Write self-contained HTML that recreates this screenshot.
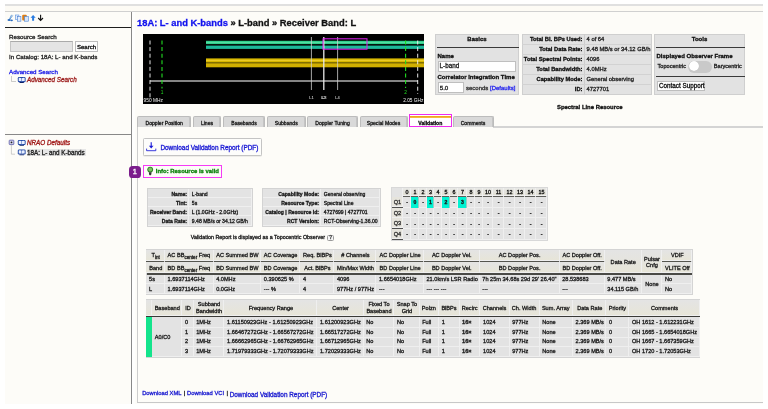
<!DOCTYPE html>
<html><head><meta charset="utf-8">
<style>
*{box-sizing:border-box}
html,body{margin:0;padding:0;background:#fff;width:768px;height:409px;overflow:hidden}
body{font-family:"Liberation Sans",sans-serif;color:#222;position:relative}
.abs{position:absolute}
#root{position:absolute;left:0;top:0;width:768px;height:409px;will-change:transform;-webkit-text-stroke:0.3px currentColor}
#cont{position:absolute;left:5px;top:4px;width:758px;height:400px;background:#fdfcf8}
.t{position:absolute;white-space:nowrap;line-height:1}
a,.lnk{color:#1a1aff;text-decoration:none}
</style></head><body><div id="root">
<div id="cont"></div>
<!-- top strip -->
<div class="abs" style="left:5px;top:4px;width:758px;height:2px;background:#e0e0e0"></div>
<div class="abs" style="left:5px;top:6px;width:758px;height:5px;background:#fdfbf5"></div>
<div class="abs" style="left:5px;top:11px;width:758px;height:1px;background:#d0d0d0"></div>

<!-- LEFT PANEL -->
<svg class="abs" style="left:7px;top:14px" width="38" height="8" viewBox="0 0 38 8">
  <path d="M4.6 0.8 L2.4 5.2 M5.8 1.4 L2.8 5.4" stroke="#4a8ad0" stroke-width="0.8" fill="none"/>
  <ellipse cx="2.1" cy="6" rx="1.6" ry="1.05" fill="#2a6cc0"/><ellipse cx="4.6" cy="6.3" rx="1.3" ry="0.9" fill="#2a6cc0"/>
  <rect x="8.3" y="1" width="3.6" height="4.6" fill="#e3eefe" stroke="#5a90dc" stroke-width="0.6"/>
  <rect x="10.3" y="2.6" width="3.6" height="4.6" fill="#e3eefe" stroke="#4a80d0" stroke-width="0.6"/>
  <rect x="15.2" y="0.8" width="4.6" height="5.8" rx="1" fill="#dc7d14"/>
  <rect x="17.6" y="2.6" width="3.8" height="4.6" fill="#d6e6fb" stroke="#4a86d8" stroke-width="0.6"/>
  <path d="M26.1 1 L28.7 3.7 L27.1 3.7 L27.1 6.8 L25.1 6.8 L25.1 3.7 L23.5 3.7 Z" fill="#2b7ce0"/>
  <path d="M33.6 0.8 L33.6 5.6 M31.2 4 L33.6 6.5 L36 4" stroke="#111" stroke-width="1.1" fill="none"/>
</svg>
<div class="abs" style="left:5px;top:27px;width:126px;height:1.2px;background:#1e1e1e"></div>
<div class="abs" style="left:131px;top:12px;width:1px;height:392px;background:#888"></div>
<div class="abs" style="left:132px;top:12px;width:3px;height:392px;background:#fefefd"></div>

<div class="t" style="left:9px;top:34px;font-size:6.2px;color:#222">Resource Search</div>
<div class="abs" style="left:9.8px;top:41.3px;width:63.4px;height:10.4px;background:#e4e4e4;border:1px solid #c4c4c4;border-top-color:#aaa"></div>
<div class="abs" style="left:75px;top:41.2px;width:23px;height:10.8px;background:#fdfdfd;border:1px solid #bdbdbd"></div>
<div class="t" style="left:77px;top:44px;font-size:6px;color:#111">Search</div>
<div class="t" style="left:9px;top:54.2px;font-size:6.2px;color:#222">In Catalog: 18A: L- and K-bands</div>
<div class="t" style="left:9px;top:69px;font-size:6.2px;color:#2020e8">Advanced Search</div>
<svg class="abs" style="left:11px;top:76px" width="16" height="8" viewBox="0 0 16 8">
  <path d="M0.5 0 L0.5 5.5 L5 5.5" stroke="#aaa" stroke-width="0.6" fill="none"/>
  <g transform="translate(6.8,1)"><rect x="0" y="0" width="7.8" height="5.2" rx="1.3" fill="#1d44a4"/><path d="M0.9 1 Q2.3 0.6 3.7 1.2 V4.3 Q2.3 3.8 0.9 4.2 Z" fill="#e9f0ff"/><path d="M4.1 1.2 Q5.5 0.6 6.9 1 V4.2 Q5.5 3.8 4.1 4.3 Z" fill="#e9f0ff"/><rect x="1.6" y="5" width="4.6" height="0.9" rx="0.4" fill="#0a1f66"/></g>
</svg>
<div class="t" style="left:27px;top:77.3px;font-size:6.3px;color:#9c1a1a;font-style:italic">Advanced Search</div>

<div class="abs" style="left:5px;top:134px;width:126px;height:1px;background:#888"></div>
<svg class="abs" style="left:6px;top:136px" width="22" height="22" viewBox="0 0 22 22">
  <rect x="3.2" y="4.2" width="4.6" height="4.4" rx="0.6" fill="#d8d8f0" stroke="#5656a6" stroke-width="0.8"/>
  <circle cx="5.5" cy="6.4" r="0.9" fill="#222"/>
  <path d="M5.4 8.8 V18.2 H9" stroke="#b0b0b0" stroke-width="0.6" fill="none"/>
  <g transform="translate(11.8,3.9)"><rect x="0" y="0" width="7.8" height="5.2" rx="1.3" fill="#1d44a4"/><path d="M0.9 1 Q2.3 0.6 3.7 1.2 V4.3 Q2.3 3.8 0.9 4.2 Z" fill="#e9f0ff"/><path d="M4.1 1.2 Q5.5 0.6 6.9 1 V4.2 Q5.5 3.8 4.1 4.3 Z" fill="#e9f0ff"/><rect x="1.6" y="5" width="4.6" height="0.9" rx="0.4" fill="#0a1f66"/></g>
  <g transform="translate(11.8,13.4)"><rect x="0" y="0" width="7.8" height="5.2" rx="1.3" fill="#1d44a4"/><path d="M0.9 1 Q2.3 0.6 3.7 1.2 V4.3 Q2.3 3.8 0.9 4.2 Z" fill="#e9f0ff"/><path d="M4.1 1.2 Q5.5 0.6 6.9 1 V4.2 Q5.5 3.8 4.1 4.3 Z" fill="#e9f0ff"/><rect x="1.6" y="5" width="4.6" height="0.9" rx="0.4" fill="#0a1f66"/></g>
</svg>
<div class="t" style="left:27px;top:139.8px;font-size:6.3px;color:#a01818;font-style:italic">NRAO Defaults</div>
<div class="abs" style="left:26.5px;top:148.5px;width:59px;height:7.5px;background:#e6e6e6"></div>
<div class="t" style="left:27px;top:149.8px;font-size:6.3px;color:#222">18A: L- and K-bands</div>

<!-- TITLE -->
<div class="t" style="left:137px;top:19px;font-size:9.36px;font-weight:bold;color:#111"><span style="color:#1212ee">18A: L- and K-bands</span> » L-band » Receiver Band: L</div>


<!-- SPECTRUM -->
<svg class="abs" style="left:143px;top:34px" width="281" height="70" viewBox="0 0 281 70">
  <rect x="0" y="0" width="281" height="70" fill="#000"/>
  <!-- bars -->
  <rect x="63" y="6.8" width="218" height="3.3" fill="#2fcf8c"/>
  <rect x="63" y="8" width="218" height="0.8" fill="#5fe0a8"/>
  <rect x="63" y="11.6" width="218" height="3.3" fill="#1cb89a"/>
  <rect x="63" y="24.4" width="218" height="4.2" fill="#d8b800"/>
  <rect x="63" y="25.9" width="218" height="0.9" fill="#f0d030"/>
  <rect x="63" y="29.2" width="218" height="4.1" fill="#d2b000"/>
  <!-- gray baseline -->
  <rect x="7" y="46.3" width="268" height="1.4" fill="#bdbdbd"/>
  <!-- dashed lines -->
  <line x1="7" y1="6.5" x2="7" y2="66" stroke="#f2f2f2" stroke-width="0.95" stroke-dasharray="4 2.6"/>
  <line x1="19" y1="6.5" x2="19" y2="54.5" stroke="#22dd22" stroke-width="1.1" stroke-dasharray="4 2.6"/>
  <line x1="262.6" y1="6.5" x2="262.6" y2="54" stroke="#22dd22" stroke-width="1.1" stroke-dasharray="4 2.6"/>
  <line x1="274.7" y1="6.5" x2="274.7" y2="60" stroke="#f2f2f2" stroke-width="0.95" stroke-dasharray="4 2.6"/>
  <!-- L lines -->
  <line x1="168.4" y1="3" x2="168.4" y2="56" stroke="#cfcfcf" stroke-width="0.8"/>
  <line x1="180.8" y1="3" x2="180.8" y2="56" stroke="#e8e8e8" stroke-width="1.3"/>
  <line x1="194.6" y1="3" x2="194.6" y2="56" stroke="#cfcfcf" stroke-width="0.8"/>
  <rect x="180" y="4.8" width="44" height="10.4" fill="none" stroke="#e020f0" stroke-width="1"/>
  <g font-family="Liberation Sans" fill="#f2f2f2">
    <text x="0.5" y="68" font-size="4.85">950 MHz</text>
    <text x="280.3" y="68" font-size="4.75" text-anchor="end">2.05 GHz</text>
    <text x="168.4" y="64.5" font-size="4" text-anchor="middle">L1</text>
    <text x="180.3" y="64.5" font-size="4" text-anchor="middle">L2</text>
    <text x="181.2" y="64.5" font-size="4" text-anchor="middle">L3</text>
    <text x="194.6" y="64.5" font-size="4" text-anchor="middle">L4</text>
  </g>
  <g font-family="Liberation Sans" font-size="4.8" fill="#22dd22">
    <text x="19" y="59.5" text-anchor="middle">1</text>
    <text x="262.6" y="60" text-anchor="middle">2</text>
  </g>
</svg>

<!-- BASICS -->
<div class="abs" style="left:435px;top:34px;width:84px;height:61px;background:#e2e2e2;border:1px solid #cfcfcf"></div>
<div class="t" style="left:435px;width:84px;text-align:center;top:36.3px;font-size:6px;font-weight:bold;color:#111">Basics</div>
<div class="abs" style="left:437px;top:46.5px;width:82px;height:1.3px;background:#3a3a3a"></div>
<div class="t" style="left:437.5px;top:52.5px;font-size:6px;font-weight:bold;color:#111">Name</div>
<div class="abs" style="left:438px;top:60.6px;width:78px;height:11px;background:#fff;border:1px solid #bfbfbf"></div>
<div class="t" style="left:439.6px;top:63.2px;font-size:6.3px;color:#222">L-band</div>
<div class="t" style="left:437.5px;top:73.5px;font-size:6px;font-weight:bold;color:#111">Correlator Integration Time</div>
<div class="abs" style="left:438px;top:82px;width:26px;height:11px;background:#fff;border:1px solid #bfbfbf"></div>
<div class="t" style="left:439.7px;top:84.6px;font-size:6.2px;color:#222">5.0</div>
<div class="t" style="left:466px;top:85px;font-size:6px;color:#333">seconds <span style="color:#2a2aee">[Defaults]</span></div>

<!-- STATS -->
<div class="abs" style="left:521.5px;top:34px;width:130px;height:61px;background:#e2e2e2;border:1px solid #cfcfcf"></div>
<div class="abs" style="left:583.5px;top:34px;width:1px;height:61px;background:#cdcdcd"></div>
<div class="abs" style="left:521.5px;top:44.3px;width:130px;height:1px;background:#d2d2d2"></div>
<div class="abs" style="left:521.5px;top:54.4px;width:130px;height:1px;background:#d2d2d2"></div>
<div class="abs" style="left:521.5px;top:64.2px;width:130px;height:1px;background:#d2d2d2"></div>
<div class="abs" style="left:521.5px;top:74.1px;width:130px;height:1px;background:#d2d2d2"></div>
<div class="abs" style="left:521.5px;top:84.3px;width:130px;height:1px;background:#d2d2d2"></div>
<div style="position:absolute;left:521.5px;top:34px;width:61px;font-size:5.75px;font-weight:bold;color:#111;text-align:right;line-height:10.1px">
Total Bl. BPs Used:<br>Total Data Rate:<br>Total Spectral Points:<br>Total Bandwidth:<br>Capability Mode:<br>ID:</div>
<div style="position:absolute;left:586.6px;top:34px;font-size:5.8px;color:#222;line-height:10.1px;white-space:nowrap">
4 of 64<br>9.48 MB/s or 34.12 GB/h<br>4096<br>4.0MHz<br>General observing<br>4727701</div>

<!-- TOOLS -->
<div class="abs" style="left:654px;top:34px;width:91px;height:61px;background:#e2e2e2;border:1px solid #cfcfcf"></div>
<div class="t" style="left:654px;width:91px;text-align:center;top:36.3px;font-size:6px;font-weight:bold;color:#111">Tools</div>
<div class="abs" style="left:656px;top:46.5px;width:89px;height:1.3px;background:#3a3a3a"></div>
<div class="t" style="left:656.5px;top:52.6px;font-size:6px;font-weight:bold;color:#111">Displayed Observer Frame</div>
<div class="t" style="left:657.5px;top:64px;font-size:5.6px;color:#222">Topocentric</div>
<div class="abs" style="left:687.6px;top:60.5px;width:24.2px;height:12px;border-radius:6px;background:#c9c9c9"></div>
<div class="abs" style="left:688.6px;top:61.4px;width:10px;height:10px;border-radius:50%;background:#fff;box-shadow:0 0 0.6px #999"></div>
<div class="t" style="left:713.8px;top:64px;font-size:5.6px;color:#222">Barycentric</div>
<div class="abs" style="left:656px;top:75.8px;width:89px;height:1.3px;background:#3a3a3a"></div>
<div class="abs" style="left:657.2px;top:81px;width:48px;height:10.4px;background:#fff;border:1px solid #bdbdbd"></div>
<div class="t" style="left:659px;top:83.2px;font-size:6.3px;color:#111">Contact Support</div>

<div class="t" style="left:557px;top:104.5px;font-size:5.9px;font-weight:bold;color:#111">Spectral Line Resource</div>

<!-- TABS -->
<style>
.tab{position:absolute;top:116.3px;height:10.6px;background:#d9d9d9;border:1px solid #bcbcbc;border-bottom:none;border-radius:2px 2px 0 0;font-size:5.1px;color:#1a1a1a;text-align:center;line-height:12.4px;white-space:nowrap;box-shadow:inset -1px 0 0 #c4c4c4}
</style>
<div class="abs" style="left:493px;top:126px;width:270px;height:2px;background:#d4d4d4"></div>
<div class="tab" style="left:137.2px;width:54px">Doppler Position</div>
<div class="tab" style="left:193px;width:28px">Lines</div>
<div class="tab" style="left:223px;width:42px">Basebands</div>
<div class="tab" style="left:266.5px;width:39.5px">Subbands</div>
<div class="tab" style="left:307px;width:51px">Doppler Tuning</div>
<div class="tab" style="left:359.5px;width:48px">Special Modes</div>
<div class="tab" style="left:452.5px;width:41px">Comments</div>
<div class="abs" style="left:408.8px;top:114.4px;width:43px;height:12.2px;background:#fff;border:1.2px solid #f02af0"></div>
<div class="abs" style="left:410px;top:115.6px;width:40.6px;height:2.2px;background:linear-gradient(#f09a10,#f6c050)"></div>
<div class="t" style="left:408.8px;width:43px;text-align:center;top:121.2px;font-size:5.1px;font-weight:bold;color:#111">Validation</div>

<!-- CONTENT PANEL BORDER -->
<div class="abs" style="left:136.5px;top:126.7px;width:1.4px;height:276.5px;background:#cdcdcd"></div>
<div class="abs" style="left:136.5px;top:401.8px;width:626.5px;height:1.4px;background:#c8c8c8"></div>

<!-- DOWNLOAD BUTTON -->
<div class="abs" style="left:142.5px;top:138px;width:119.3px;height:17.7px;background:#fdfdfb;border:1px solid #c4c4c4;border-radius:1.5px;box-shadow:0 0.5px 0.6px rgba(0,0,0,.12)"></div>
<svg class="abs" style="left:146px;top:142px" width="11" height="9.5" viewBox="0 0 11 9.5">
  <path d="M5.2 0.2 V4.6" stroke="#1a1ad8" stroke-width="1.1"/>
  <path d="M2.9 3.7 L7.5 3.7 L5.2 6.6 Z" fill="#1a1ad8"/>
  <path d="M0.6 6.6 V8.7 H9.8 V6.6" stroke="#1a1ad8" stroke-width="0.85" fill="none"/>
</svg>
<div class="t" style="left:160.4px;top:144.6px;font-size:6.43px;color:#1818d4">Download Validation Report (PDF)</div>

<!-- INFO -->
<div class="abs" style="left:128.8px;top:165.8px;width:12.1px;height:11.9px;border-radius:3.6px;background:#7b1d8c"></div>
<div class="t" style="left:128.8px;width:12.1px;text-align:center;top:167.6px;font-size:7.4px;color:#fff">1</div>
<div class="abs" style="left:142.7px;top:165px;width:79.2px;height:12.7px;border:1.2px solid #f53cf5;background:#fdfcf8"></div>
<svg class="abs" style="left:147px;top:166.3px" width="7" height="10" viewBox="0 0 7 10">
  <circle cx="3.2" cy="3.6" r="2.9" fill="#2e7f22"/>
  <circle cx="3.2" cy="3.5" r="1.9" fill="#7cc462"/>
  <path d="M1.8 6.3 H4.6 L4.2 8.8 Q3.2 9.8 2.2 8.8 Z" fill="#333"/>
</svg>
<div class="t" style="left:155.8px;top:168.5px;font-size:5.93px;font-weight:bold;color:#0c800c">Info: Resource is valid</div>






















<!--TABLES--><style>.c,.c0{position:absolute}.c{box-shadow:inset -1px -1px 0 #efefef}.ct{position:absolute;white-space:nowrap}</style>
<div class="abs" style="left:147px;top:188px;width:106px;height:39px;background:#d3d3d3"></div>
<div class="c" style="left:148px;top:189px;width:41px;height:9px;background:#e3e3e3;"></div><div class="ct" style="left:148.00px;width:39.00px;text-align:right;top:190.64px;font-size:5.1px;line-height:6.12px;color:#1a1a1a;font-weight:bold;">Name:</div>
<div class="c" style="left:189px;top:189px;width:63px;height:9px;background:#e3e3e3;"></div><div class="ct" style="left:191.80px;top:190.64px;font-size:5.1px;line-height:6.12px;color:#1a1a1a;">L-band</div>
<div class="c" style="left:148px;top:198px;width:41px;height:9px;background:#e3e3e3;"></div><div class="ct" style="left:148.00px;width:39.00px;text-align:right;top:199.64px;font-size:5.1px;line-height:6.12px;color:#1a1a1a;font-weight:bold;">Tint:</div>
<div class="c" style="left:189px;top:198px;width:63px;height:9px;background:#e3e3e3;"></div><div class="ct" style="left:191.80px;top:199.64px;font-size:5.1px;line-height:6.12px;color:#1a1a1a;">5s</div>
<div class="c" style="left:148px;top:207px;width:41px;height:9px;background:#e3e3e3;"></div><div class="ct" style="left:148.00px;width:39.00px;text-align:right;top:208.64px;font-size:5.1px;line-height:6.12px;color:#1a1a1a;font-weight:bold;">Receiver Band:</div>
<div class="c" style="left:189px;top:207px;width:63px;height:9px;background:#e3e3e3;"></div><div class="ct" style="left:191.80px;top:208.64px;font-size:5.1px;line-height:6.12px;color:#1a1a1a;">L (1.0GHz - 2.0GHz)</div>
<div class="c" style="left:148px;top:216px;width:41px;height:10px;background:#e3e3e3;"></div><div class="ct" style="left:148.00px;width:39.00px;text-align:right;top:218.14px;font-size:5.1px;line-height:6.12px;color:#1a1a1a;font-weight:bold;">Data Rate:</div>
<div class="c" style="left:189px;top:216px;width:63px;height:10px;background:#e3e3e3;"></div><div class="ct" style="left:191.80px;top:218.14px;font-size:5.1px;line-height:6.12px;color:#1a1a1a;">9.48 MB/s or 34.12 GB/h</div>
<div class="abs" style="left:262px;top:188px;width:119px;height:39px;background:#d3d3d3"></div>
<div class="c" style="left:263px;top:189px;width:58px;height:9px;background:#e3e3e3;"></div><div class="ct" style="left:263.00px;width:56.00px;text-align:right;top:190.64px;font-size:5.1px;line-height:6.12px;color:#1a1a1a;font-weight:bold;">Capability Mode:</div>
<div class="c" style="left:321px;top:189px;width:59px;height:9px;background:#e3e3e3;"></div><div class="ct" style="left:323.80px;top:190.64px;font-size:5.1px;line-height:6.12px;color:#1a1a1a;">General observing</div>
<div class="c" style="left:263px;top:198px;width:58px;height:9px;background:#e3e3e3;"></div><div class="ct" style="left:263.00px;width:56.00px;text-align:right;top:199.64px;font-size:5.1px;line-height:6.12px;color:#1a1a1a;font-weight:bold;">Resource Type:</div>
<div class="c" style="left:321px;top:198px;width:59px;height:9px;background:#e3e3e3;"></div><div class="ct" style="left:323.80px;top:199.64px;font-size:5.1px;line-height:6.12px;color:#1a1a1a;">Spectral Line</div>
<div class="c" style="left:263px;top:207px;width:58px;height:9px;background:#e3e3e3;"></div><div class="ct" style="left:263.00px;width:56.00px;text-align:right;top:208.64px;font-size:5.1px;line-height:6.12px;color:#1a1a1a;font-weight:bold;">Catalog | Resource Id:</div>
<div class="c" style="left:321px;top:207px;width:59px;height:9px;background:#e3e3e3;"></div><div class="ct" style="left:323.80px;top:208.64px;font-size:5.1px;line-height:6.12px;color:#1a1a1a;">4727699 | 4727701</div>
<div class="c" style="left:263px;top:216px;width:58px;height:10px;background:#e3e3e3;"></div><div class="ct" style="left:263.00px;width:56.00px;text-align:right;top:218.14px;font-size:5.1px;line-height:6.12px;color:#1a1a1a;font-weight:bold;">RCT Version:</div>
<div class="c" style="left:321px;top:216px;width:59px;height:10px;background:#e3e3e3;"></div><div class="ct" style="left:323.80px;top:218.14px;font-size:5.1px;line-height:6.12px;color:#1a1a1a;">RCT-Observing-1.36.00</div>
<div class="t" style="left:190.8px;top:235.2px;font-size:5.36px;color:#1a1a1a">Validation Report is displayed as a Topocentric Observer</div>
<div class="abs" style="left:327.3px;top:234.8px;width:6.7px;height:6px;border:0.8px solid #9a9a9a;border-radius:1.5px;background:#f6f6f6"></div>
<div class="t" style="left:327.3px;width:6.7px;text-align:center;top:235.5px;font-size:4.8px;font-weight:bold;color:#555">?</div>
<div class="abs" style="left:391px;top:187px;width:157px;height:54px;background:#d8d8d8"></div>
<div class="c" style="left:392px;top:188px;width:11px;height:10px;background:#e3e3e3;"></div>
<div class="c" style="left:403px;top:188px;width:8px;height:8px;background:linear-gradient(#e8e8e6,#e0ded2);"></div><div class="ct" style="left:403.00px;width:8.00px;text-align:center;top:189.10px;font-size:5.4px;line-height:6.48px;color:#111;">0</div>
<div class="abs" style="left:403px;top:195.7px;width:7.399999999999977px;height:1.3000000000000114px;background:#5e5e5a"></div>
<div class="c" style="left:411px;top:188px;width:8px;height:8px;background:linear-gradient(#e8e8e6,#e0ded2);"></div><div class="ct" style="left:411.00px;width:8.00px;text-align:center;top:189.10px;font-size:5.4px;line-height:6.48px;color:#111;">1</div>
<div class="abs" style="left:411px;top:195.7px;width:7.399999999999977px;height:1.3000000000000114px;background:#5e5e5a"></div>
<div class="c" style="left:419px;top:188px;width:8px;height:8px;background:linear-gradient(#e8e8e6,#e0ded2);"></div><div class="ct" style="left:419.00px;width:8.00px;text-align:center;top:189.10px;font-size:5.4px;line-height:6.48px;color:#111;">2</div>
<div class="abs" style="left:419px;top:195.7px;width:7.399999999999977px;height:1.3000000000000114px;background:#5e5e5a"></div>
<div class="c" style="left:427px;top:188px;width:7px;height:8px;background:linear-gradient(#e8e8e6,#e0ded2);"></div><div class="ct" style="left:427.00px;width:7.00px;text-align:center;top:189.10px;font-size:5.4px;line-height:6.48px;color:#111;">3</div>
<div class="abs" style="left:427px;top:195.7px;width:6.399999999999977px;height:1.3000000000000114px;background:#5e5e5a"></div>
<div class="c" style="left:434px;top:188px;width:8px;height:8px;background:linear-gradient(#e8e8e6,#e0ded2);"></div><div class="ct" style="left:434.00px;width:8.00px;text-align:center;top:189.10px;font-size:5.4px;line-height:6.48px;color:#111;">4</div>
<div class="abs" style="left:434px;top:195.7px;width:7.399999999999977px;height:1.3000000000000114px;background:#5e5e5a"></div>
<div class="c" style="left:442px;top:188px;width:8px;height:8px;background:linear-gradient(#e8e8e6,#e0ded2);"></div><div class="ct" style="left:442.00px;width:8.00px;text-align:center;top:189.10px;font-size:5.4px;line-height:6.48px;color:#111;">5</div>
<div class="abs" style="left:442px;top:195.7px;width:7.399999999999977px;height:1.3000000000000114px;background:#5e5e5a"></div>
<div class="c" style="left:450px;top:188px;width:8px;height:8px;background:linear-gradient(#e8e8e6,#e0ded2);"></div><div class="ct" style="left:450.00px;width:8.00px;text-align:center;top:189.10px;font-size:5.4px;line-height:6.48px;color:#111;">6</div>
<div class="abs" style="left:450px;top:195.7px;width:7.399999999999977px;height:1.3000000000000114px;background:#5e5e5a"></div>
<div class="c" style="left:458px;top:188px;width:9px;height:8px;background:linear-gradient(#e8e8e6,#e0ded2);"></div><div class="ct" style="left:458.00px;width:9.00px;text-align:center;top:189.10px;font-size:5.4px;line-height:6.48px;color:#111;">7</div>
<div class="abs" style="left:458px;top:195.7px;width:8.399999999999977px;height:1.3000000000000114px;background:#5e5e5a"></div>
<div class="c" style="left:467px;top:188px;width:8px;height:8px;background:linear-gradient(#e8e8e6,#e0ded2);"></div><div class="ct" style="left:467.00px;width:8.00px;text-align:center;top:189.10px;font-size:5.4px;line-height:6.48px;color:#111;">8</div>
<div class="abs" style="left:467px;top:195.7px;width:7.399999999999977px;height:1.3000000000000114px;background:#5e5e5a"></div>
<div class="c" style="left:475px;top:188px;width:8px;height:8px;background:linear-gradient(#e8e8e6,#e0ded2);"></div><div class="ct" style="left:475.00px;width:8.00px;text-align:center;top:189.10px;font-size:5.4px;line-height:6.48px;color:#111;">9</div>
<div class="abs" style="left:475px;top:195.7px;width:7.399999999999977px;height:1.3000000000000114px;background:#5e5e5a"></div>
<div class="c" style="left:483px;top:188px;width:10px;height:8px;background:linear-gradient(#e8e8e6,#e0ded2);"></div><div class="ct" style="left:483.00px;width:10.00px;text-align:center;top:189.10px;font-size:5.4px;line-height:6.48px;color:#111;">10</div>
<div class="abs" style="left:483px;top:195.7px;width:9.399999999999977px;height:1.3000000000000114px;background:#5e5e5a"></div>
<div class="c" style="left:493px;top:188px;width:11px;height:8px;background:linear-gradient(#e8e8e6,#e0ded2);"></div><div class="ct" style="left:493.00px;width:11.00px;text-align:center;top:189.10px;font-size:5.4px;line-height:6.48px;color:#111;">11</div>
<div class="abs" style="left:493px;top:195.7px;width:10.399999999999977px;height:1.3000000000000114px;background:#5e5e5a"></div>
<div class="c" style="left:504px;top:188px;width:11px;height:8px;background:linear-gradient(#e8e8e6,#e0ded2);"></div><div class="ct" style="left:504.00px;width:11.00px;text-align:center;top:189.10px;font-size:5.4px;line-height:6.48px;color:#111;">12</div>
<div class="abs" style="left:504px;top:195.7px;width:10.399999999999977px;height:1.3000000000000114px;background:#5e5e5a"></div>
<div class="c" style="left:515px;top:188px;width:10px;height:8px;background:linear-gradient(#e8e8e6,#e0ded2);"></div><div class="ct" style="left:515.00px;width:10.00px;text-align:center;top:189.10px;font-size:5.4px;line-height:6.48px;color:#111;">13</div>
<div class="abs" style="left:515px;top:195.7px;width:9.399999999999977px;height:1.3000000000000114px;background:#5e5e5a"></div>
<div class="c" style="left:525px;top:188px;width:11px;height:8px;background:linear-gradient(#e8e8e6,#e0ded2);"></div><div class="ct" style="left:525.00px;width:11.00px;text-align:center;top:189.10px;font-size:5.4px;line-height:6.48px;color:#111;">14</div>
<div class="abs" style="left:525px;top:195.7px;width:10.399999999999977px;height:1.3000000000000114px;background:#5e5e5a"></div>
<div class="c" style="left:536px;top:188px;width:11px;height:8px;background:linear-gradient(#e8e8e6,#e0ded2);"></div><div class="ct" style="left:536.00px;width:11.00px;text-align:center;top:189.10px;font-size:5.4px;line-height:6.48px;color:#111;">15</div>
<div class="abs" style="left:536px;top:195.7px;width:10.399999999999977px;height:1.3000000000000114px;background:#5e5e5a"></div>
<div class="c" style="left:392px;top:197px;width:11px;height:10px;background:#e6e4dc;"></div><div class="ct" style="left:392.00px;width:11.00px;text-align:center;top:198.60px;font-size:5.6px;line-height:6.72px;color:#333;">Q1</div>
<div class="abs" style="left:392px;top:207px;width:11px;height:1px;background:#505050"></div>
<div class="c" style="left:403px;top:197px;width:8px;height:11px;background:#e3e3e3;"></div><div class="ct" style="left:403.00px;width:8.00px;text-align:center;top:199.30px;font-size:5.1px;line-height:6.12px;color:#1a1a1a;font-weight:bold;">-</div>
<div class="c" style="left:411px;top:197px;width:8px;height:11px;background:#00f2d2;box-shadow:inset -0.6px 0 0 #f2b8b8"></div><div class="ct" style="left:411.00px;width:8.00px;text-align:center;top:199.30px;font-size:5.1px;line-height:6.12px;color:#1a1a1a;font-weight:bold;">0</div>
<div class="c" style="left:419px;top:197px;width:8px;height:11px;background:#e3e3e3;"></div><div class="ct" style="left:419.00px;width:8.00px;text-align:center;top:199.30px;font-size:5.1px;line-height:6.12px;color:#1a1a1a;font-weight:bold;">-</div>
<div class="c" style="left:427px;top:197px;width:7px;height:11px;background:#00f2d2;box-shadow:inset -0.6px 0 0 #f2b8b8"></div><div class="ct" style="left:427.00px;width:7.00px;text-align:center;top:199.30px;font-size:5.1px;line-height:6.12px;color:#1a1a1a;font-weight:bold;">1</div>
<div class="c" style="left:434px;top:197px;width:8px;height:11px;background:#e3e3e3;"></div><div class="ct" style="left:434.00px;width:8.00px;text-align:center;top:199.30px;font-size:5.1px;line-height:6.12px;color:#1a1a1a;font-weight:bold;">-</div>
<div class="c" style="left:442px;top:197px;width:8px;height:11px;background:#00f2d2;box-shadow:inset -0.6px 0 0 #f2b8b8"></div><div class="ct" style="left:442.00px;width:8.00px;text-align:center;top:199.30px;font-size:5.1px;line-height:6.12px;color:#1a1a1a;font-weight:bold;">2</div>
<div class="c" style="left:450px;top:197px;width:8px;height:11px;background:#e3e3e3;"></div><div class="ct" style="left:450.00px;width:8.00px;text-align:center;top:199.30px;font-size:5.1px;line-height:6.12px;color:#1a1a1a;font-weight:bold;">-</div>
<div class="c" style="left:458px;top:197px;width:9px;height:11px;background:#00f2d2;box-shadow:inset -0.6px 0 0 #f2b8b8"></div><div class="ct" style="left:458.00px;width:9.00px;text-align:center;top:199.30px;font-size:5.1px;line-height:6.12px;color:#1a1a1a;font-weight:bold;">3</div>
<div class="c" style="left:467px;top:197px;width:8px;height:11px;background:#e3e3e3;"></div><div class="ct" style="left:467.00px;width:8.00px;text-align:center;top:199.30px;font-size:5.1px;line-height:6.12px;color:#1a1a1a;font-weight:bold;">-</div>
<div class="c" style="left:475px;top:197px;width:8px;height:11px;background:#e3e3e3;"></div><div class="ct" style="left:475.00px;width:8.00px;text-align:center;top:199.30px;font-size:5.1px;line-height:6.12px;color:#1a1a1a;font-weight:bold;">-</div>
<div class="c" style="left:483px;top:197px;width:10px;height:11px;background:#e3e3e3;"></div><div class="ct" style="left:483.00px;width:10.00px;text-align:center;top:199.30px;font-size:5.1px;line-height:6.12px;color:#1a1a1a;font-weight:bold;">-</div>
<div class="c" style="left:493px;top:197px;width:11px;height:11px;background:#e3e3e3;"></div><div class="ct" style="left:493.00px;width:11.00px;text-align:center;top:199.30px;font-size:5.1px;line-height:6.12px;color:#1a1a1a;font-weight:bold;">-</div>
<div class="c" style="left:504px;top:197px;width:11px;height:11px;background:#e3e3e3;"></div><div class="ct" style="left:504.00px;width:11.00px;text-align:center;top:199.30px;font-size:5.1px;line-height:6.12px;color:#1a1a1a;font-weight:bold;">-</div>
<div class="c" style="left:515px;top:197px;width:10px;height:11px;background:#e3e3e3;"></div><div class="ct" style="left:515.00px;width:10.00px;text-align:center;top:199.30px;font-size:5.1px;line-height:6.12px;color:#1a1a1a;font-weight:bold;">-</div>
<div class="c" style="left:525px;top:197px;width:11px;height:11px;background:#e3e3e3;"></div><div class="ct" style="left:525.00px;width:11.00px;text-align:center;top:199.30px;font-size:5.1px;line-height:6.12px;color:#1a1a1a;font-weight:bold;">-</div>
<div class="c" style="left:536px;top:197px;width:11px;height:11px;background:#e3e3e3;"></div><div class="ct" style="left:536.00px;width:11.00px;text-align:center;top:199.30px;font-size:5.1px;line-height:6.12px;color:#1a1a1a;font-weight:bold;">-</div>
<div class="c" style="left:392px;top:208px;width:11px;height:10px;background:#e6e4dc;"></div><div class="ct" style="left:392.00px;width:11.00px;text-align:center;top:209.60px;font-size:5.6px;line-height:6.72px;color:#333;">Q2</div>
<div class="abs" style="left:392px;top:217.5px;width:11px;height:1.0px;background:#505050"></div>
<div class="c" style="left:403px;top:208px;width:8px;height:10px;background:#e3e3e3;"></div><div class="ct" style="left:403.00px;width:8.00px;text-align:center;top:210.30px;font-size:5.1px;line-height:6.12px;color:#1a1a1a;font-weight:bold;">-</div>
<div class="c" style="left:411px;top:208px;width:8px;height:10px;background:#e3e3e3;"></div><div class="ct" style="left:411.00px;width:8.00px;text-align:center;top:210.30px;font-size:5.1px;line-height:6.12px;color:#1a1a1a;font-weight:bold;">-</div>
<div class="c" style="left:419px;top:208px;width:8px;height:10px;background:#e3e3e3;"></div><div class="ct" style="left:419.00px;width:8.00px;text-align:center;top:210.30px;font-size:5.1px;line-height:6.12px;color:#1a1a1a;font-weight:bold;">-</div>
<div class="c" style="left:427px;top:208px;width:7px;height:10px;background:#e3e3e3;"></div><div class="ct" style="left:427.00px;width:7.00px;text-align:center;top:210.30px;font-size:5.1px;line-height:6.12px;color:#1a1a1a;font-weight:bold;">-</div>
<div class="c" style="left:434px;top:208px;width:8px;height:10px;background:#e3e3e3;"></div><div class="ct" style="left:434.00px;width:8.00px;text-align:center;top:210.30px;font-size:5.1px;line-height:6.12px;color:#1a1a1a;font-weight:bold;">-</div>
<div class="c" style="left:442px;top:208px;width:8px;height:10px;background:#e3e3e3;"></div><div class="ct" style="left:442.00px;width:8.00px;text-align:center;top:210.30px;font-size:5.1px;line-height:6.12px;color:#1a1a1a;font-weight:bold;">-</div>
<div class="c" style="left:450px;top:208px;width:8px;height:10px;background:#e3e3e3;"></div><div class="ct" style="left:450.00px;width:8.00px;text-align:center;top:210.30px;font-size:5.1px;line-height:6.12px;color:#1a1a1a;font-weight:bold;">-</div>
<div class="c" style="left:458px;top:208px;width:9px;height:10px;background:#e3e3e3;"></div><div class="ct" style="left:458.00px;width:9.00px;text-align:center;top:210.30px;font-size:5.1px;line-height:6.12px;color:#1a1a1a;font-weight:bold;">-</div>
<div class="c" style="left:467px;top:208px;width:8px;height:10px;background:#e3e3e3;"></div><div class="ct" style="left:467.00px;width:8.00px;text-align:center;top:210.30px;font-size:5.1px;line-height:6.12px;color:#1a1a1a;font-weight:bold;">-</div>
<div class="c" style="left:475px;top:208px;width:8px;height:10px;background:#e3e3e3;"></div><div class="ct" style="left:475.00px;width:8.00px;text-align:center;top:210.30px;font-size:5.1px;line-height:6.12px;color:#1a1a1a;font-weight:bold;">-</div>
<div class="c" style="left:483px;top:208px;width:10px;height:10px;background:#e3e3e3;"></div><div class="ct" style="left:483.00px;width:10.00px;text-align:center;top:210.30px;font-size:5.1px;line-height:6.12px;color:#1a1a1a;font-weight:bold;">-</div>
<div class="c" style="left:493px;top:208px;width:11px;height:10px;background:#e3e3e3;"></div><div class="ct" style="left:493.00px;width:11.00px;text-align:center;top:210.30px;font-size:5.1px;line-height:6.12px;color:#1a1a1a;font-weight:bold;">-</div>
<div class="c" style="left:504px;top:208px;width:11px;height:10px;background:#e3e3e3;"></div><div class="ct" style="left:504.00px;width:11.00px;text-align:center;top:210.30px;font-size:5.1px;line-height:6.12px;color:#1a1a1a;font-weight:bold;">-</div>
<div class="c" style="left:515px;top:208px;width:10px;height:10px;background:#e3e3e3;"></div><div class="ct" style="left:515.00px;width:10.00px;text-align:center;top:210.30px;font-size:5.1px;line-height:6.12px;color:#1a1a1a;font-weight:bold;">-</div>
<div class="c" style="left:525px;top:208px;width:11px;height:10px;background:#e3e3e3;"></div><div class="ct" style="left:525.00px;width:11.00px;text-align:center;top:210.30px;font-size:5.1px;line-height:6.12px;color:#1a1a1a;font-weight:bold;">-</div>
<div class="c" style="left:536px;top:208px;width:11px;height:10px;background:#e3e3e3;"></div><div class="ct" style="left:536.00px;width:11.00px;text-align:center;top:210.30px;font-size:5.1px;line-height:6.12px;color:#1a1a1a;font-weight:bold;">-</div>
<div class="c" style="left:392px;top:218px;width:11px;height:10px;background:#e6e4dc;"></div><div class="ct" style="left:392.00px;width:11.00px;text-align:center;top:220.10px;font-size:5.6px;line-height:6.72px;color:#333;">Q3</div>
<div class="abs" style="left:392px;top:228px;width:11px;height:1px;background:#505050"></div>
<div class="c" style="left:403px;top:218px;width:8px;height:11px;background:#e3e3e3;"></div><div class="ct" style="left:403.00px;width:8.00px;text-align:center;top:220.80px;font-size:5.1px;line-height:6.12px;color:#1a1a1a;font-weight:bold;">-</div>
<div class="c" style="left:411px;top:218px;width:8px;height:11px;background:#e3e3e3;"></div><div class="ct" style="left:411.00px;width:8.00px;text-align:center;top:220.80px;font-size:5.1px;line-height:6.12px;color:#1a1a1a;font-weight:bold;">-</div>
<div class="c" style="left:419px;top:218px;width:8px;height:11px;background:#e3e3e3;"></div><div class="ct" style="left:419.00px;width:8.00px;text-align:center;top:220.80px;font-size:5.1px;line-height:6.12px;color:#1a1a1a;font-weight:bold;">-</div>
<div class="c" style="left:427px;top:218px;width:7px;height:11px;background:#e3e3e3;"></div><div class="ct" style="left:427.00px;width:7.00px;text-align:center;top:220.80px;font-size:5.1px;line-height:6.12px;color:#1a1a1a;font-weight:bold;">-</div>
<div class="c" style="left:434px;top:218px;width:8px;height:11px;background:#e3e3e3;"></div><div class="ct" style="left:434.00px;width:8.00px;text-align:center;top:220.80px;font-size:5.1px;line-height:6.12px;color:#1a1a1a;font-weight:bold;">-</div>
<div class="c" style="left:442px;top:218px;width:8px;height:11px;background:#e3e3e3;"></div><div class="ct" style="left:442.00px;width:8.00px;text-align:center;top:220.80px;font-size:5.1px;line-height:6.12px;color:#1a1a1a;font-weight:bold;">-</div>
<div class="c" style="left:450px;top:218px;width:8px;height:11px;background:#e3e3e3;"></div><div class="ct" style="left:450.00px;width:8.00px;text-align:center;top:220.80px;font-size:5.1px;line-height:6.12px;color:#1a1a1a;font-weight:bold;">-</div>
<div class="c" style="left:458px;top:218px;width:9px;height:11px;background:#e3e3e3;"></div><div class="ct" style="left:458.00px;width:9.00px;text-align:center;top:220.80px;font-size:5.1px;line-height:6.12px;color:#1a1a1a;font-weight:bold;">-</div>
<div class="c" style="left:467px;top:218px;width:8px;height:11px;background:#e3e3e3;"></div><div class="ct" style="left:467.00px;width:8.00px;text-align:center;top:220.80px;font-size:5.1px;line-height:6.12px;color:#1a1a1a;font-weight:bold;">-</div>
<div class="c" style="left:475px;top:218px;width:8px;height:11px;background:#e3e3e3;"></div><div class="ct" style="left:475.00px;width:8.00px;text-align:center;top:220.80px;font-size:5.1px;line-height:6.12px;color:#1a1a1a;font-weight:bold;">-</div>
<div class="c" style="left:483px;top:218px;width:10px;height:11px;background:#e3e3e3;"></div><div class="ct" style="left:483.00px;width:10.00px;text-align:center;top:220.80px;font-size:5.1px;line-height:6.12px;color:#1a1a1a;font-weight:bold;">-</div>
<div class="c" style="left:493px;top:218px;width:11px;height:11px;background:#e3e3e3;"></div><div class="ct" style="left:493.00px;width:11.00px;text-align:center;top:220.80px;font-size:5.1px;line-height:6.12px;color:#1a1a1a;font-weight:bold;">-</div>
<div class="c" style="left:504px;top:218px;width:11px;height:11px;background:#e3e3e3;"></div><div class="ct" style="left:504.00px;width:11.00px;text-align:center;top:220.80px;font-size:5.1px;line-height:6.12px;color:#1a1a1a;font-weight:bold;">-</div>
<div class="c" style="left:515px;top:218px;width:10px;height:11px;background:#e3e3e3;"></div><div class="ct" style="left:515.00px;width:10.00px;text-align:center;top:220.80px;font-size:5.1px;line-height:6.12px;color:#1a1a1a;font-weight:bold;">-</div>
<div class="c" style="left:525px;top:218px;width:11px;height:11px;background:#e3e3e3;"></div><div class="ct" style="left:525.00px;width:11.00px;text-align:center;top:220.80px;font-size:5.1px;line-height:6.12px;color:#1a1a1a;font-weight:bold;">-</div>
<div class="c" style="left:536px;top:218px;width:11px;height:11px;background:#e3e3e3;"></div><div class="ct" style="left:536.00px;width:11.00px;text-align:center;top:220.80px;font-size:5.1px;line-height:6.12px;color:#1a1a1a;font-weight:bold;">-</div>
<div class="c" style="left:392px;top:229px;width:11px;height:10px;background:#e6e4dc;"></div><div class="ct" style="left:392.00px;width:11.00px;text-align:center;top:230.60px;font-size:5.6px;line-height:6.72px;color:#333;">Q4</div>
<div class="abs" style="left:392px;top:239px;width:11px;height:1px;background:#505050"></div>
<div class="c" style="left:403px;top:229px;width:8px;height:11px;background:#e3e3e3;"></div><div class="ct" style="left:403.00px;width:8.00px;text-align:center;top:231.30px;font-size:5.1px;line-height:6.12px;color:#1a1a1a;font-weight:bold;">-</div>
<div class="c" style="left:411px;top:229px;width:8px;height:11px;background:#e3e3e3;"></div><div class="ct" style="left:411.00px;width:8.00px;text-align:center;top:231.30px;font-size:5.1px;line-height:6.12px;color:#1a1a1a;font-weight:bold;">-</div>
<div class="c" style="left:419px;top:229px;width:8px;height:11px;background:#e3e3e3;"></div><div class="ct" style="left:419.00px;width:8.00px;text-align:center;top:231.30px;font-size:5.1px;line-height:6.12px;color:#1a1a1a;font-weight:bold;">-</div>
<div class="c" style="left:427px;top:229px;width:7px;height:11px;background:#e3e3e3;"></div><div class="ct" style="left:427.00px;width:7.00px;text-align:center;top:231.30px;font-size:5.1px;line-height:6.12px;color:#1a1a1a;font-weight:bold;">-</div>
<div class="c" style="left:434px;top:229px;width:8px;height:11px;background:#e3e3e3;"></div><div class="ct" style="left:434.00px;width:8.00px;text-align:center;top:231.30px;font-size:5.1px;line-height:6.12px;color:#1a1a1a;font-weight:bold;">-</div>
<div class="c" style="left:442px;top:229px;width:8px;height:11px;background:#e3e3e3;"></div><div class="ct" style="left:442.00px;width:8.00px;text-align:center;top:231.30px;font-size:5.1px;line-height:6.12px;color:#1a1a1a;font-weight:bold;">-</div>
<div class="c" style="left:450px;top:229px;width:8px;height:11px;background:#e3e3e3;"></div><div class="ct" style="left:450.00px;width:8.00px;text-align:center;top:231.30px;font-size:5.1px;line-height:6.12px;color:#1a1a1a;font-weight:bold;">-</div>
<div class="c" style="left:458px;top:229px;width:9px;height:11px;background:#e3e3e3;"></div><div class="ct" style="left:458.00px;width:9.00px;text-align:center;top:231.30px;font-size:5.1px;line-height:6.12px;color:#1a1a1a;font-weight:bold;">-</div>
<div class="c" style="left:467px;top:229px;width:8px;height:11px;background:#e3e3e3;"></div><div class="ct" style="left:467.00px;width:8.00px;text-align:center;top:231.30px;font-size:5.1px;line-height:6.12px;color:#1a1a1a;font-weight:bold;">-</div>
<div class="c" style="left:475px;top:229px;width:8px;height:11px;background:#e3e3e3;"></div><div class="ct" style="left:475.00px;width:8.00px;text-align:center;top:231.30px;font-size:5.1px;line-height:6.12px;color:#1a1a1a;font-weight:bold;">-</div>
<div class="c" style="left:483px;top:229px;width:10px;height:11px;background:#e3e3e3;"></div><div class="ct" style="left:483.00px;width:10.00px;text-align:center;top:231.30px;font-size:5.1px;line-height:6.12px;color:#1a1a1a;font-weight:bold;">-</div>
<div class="c" style="left:493px;top:229px;width:11px;height:11px;background:#e3e3e3;"></div><div class="ct" style="left:493.00px;width:11.00px;text-align:center;top:231.30px;font-size:5.1px;line-height:6.12px;color:#1a1a1a;font-weight:bold;">-</div>
<div class="c" style="left:504px;top:229px;width:11px;height:11px;background:#e3e3e3;"></div><div class="ct" style="left:504.00px;width:11.00px;text-align:center;top:231.30px;font-size:5.1px;line-height:6.12px;color:#1a1a1a;font-weight:bold;">-</div>
<div class="c" style="left:515px;top:229px;width:10px;height:11px;background:#e3e3e3;"></div><div class="ct" style="left:515.00px;width:10.00px;text-align:center;top:231.30px;font-size:5.1px;line-height:6.12px;color:#1a1a1a;font-weight:bold;">-</div>
<div class="c" style="left:525px;top:229px;width:11px;height:11px;background:#e3e3e3;"></div><div class="ct" style="left:525.00px;width:11.00px;text-align:center;top:231.30px;font-size:5.1px;line-height:6.12px;color:#1a1a1a;font-weight:bold;">-</div>
<div class="c" style="left:536px;top:229px;width:11px;height:11px;background:#e3e3e3;"></div><div class="ct" style="left:536.00px;width:11.00px;text-align:center;top:231.30px;font-size:5.1px;line-height:6.12px;color:#1a1a1a;font-weight:bold;">-</div>
<div class="abs" style="left:146px;top:249px;width:547px;height:46px;background:#d4d4d4"></div>
<div class="c" style="left:146px;top:250px;width:19px;height:11px;background:linear-gradient(#e4e4e4,#e7e5d7);"></div><div class="ct" style="left:146.50px;width:18.50px;text-align:center;top:252.14px;font-size:5.6px;line-height:6.72px;color:#1a1a1a;">T<span style="font-size:4.6px;vertical-align:-1.6px">int</span></div>
<div class="c" style="left:146px;top:262px;width:19px;height:11px;background:linear-gradient(#e4e4e4,#e7e5d7);"></div><div class="ct" style="left:146.50px;width:18.50px;text-align:center;top:264.89px;font-size:5.6px;line-height:6.72px;color:#1a1a1a;">Band</div>
<div class="c" style="left:165px;top:250px;width:49px;height:11px;background:linear-gradient(#e4e4e4,#e7e5d7);"></div><div class="ct" style="left:167.60px;top:252.14px;font-size:5.6px;line-height:6.72px;color:#1a1a1a;">AC BB<span style="font-size:4.6px;vertical-align:-1.6px">center</span> Freq</div>
<div class="c" style="left:165px;top:262px;width:49px;height:11px;background:linear-gradient(#e4e4e4,#e7e5d7);"></div><div class="ct" style="left:167.60px;top:264.89px;font-size:5.6px;line-height:6.72px;color:#1a1a1a;">BD BB<span style="font-size:4.6px;vertical-align:-1.6px">center</span> Freq</div>
<div class="c" style="left:214px;top:250px;width:47px;height:11px;background:linear-gradient(#e4e4e4,#e7e5d7);"></div><div class="ct" style="left:216.20px;top:252.14px;font-size:5.6px;line-height:6.72px;color:#1a1a1a;">AC Summed BW</div>
<div class="c" style="left:214px;top:262px;width:47px;height:11px;background:linear-gradient(#e4e4e4,#e7e5d7);"></div><div class="ct" style="left:216.20px;top:264.89px;font-size:5.6px;line-height:6.72px;color:#1a1a1a;">BD Summed BW</div>
<div class="c" style="left:261px;top:250px;width:39px;height:11px;background:linear-gradient(#e4e4e4,#e7e5d7);"></div><div class="ct" style="left:263.85px;top:252.14px;font-size:5.6px;line-height:6.72px;color:#1a1a1a;">AC Coverage</div>
<div class="c" style="left:261px;top:262px;width:39px;height:11px;background:linear-gradient(#e4e4e4,#e7e5d7);"></div><div class="ct" style="left:263.85px;top:264.89px;font-size:5.6px;line-height:6.72px;color:#1a1a1a;">BD Coverage</div>
<div class="c" style="left:300px;top:250px;width:34px;height:11px;background:linear-gradient(#e4e4e4,#e7e5d7);"></div><div class="ct" style="left:300.40px;width:34.00px;text-align:center;top:252.14px;font-size:5.6px;line-height:6.72px;color:#1a1a1a;">Req. BlBPs</div>
<div class="c" style="left:300px;top:262px;width:34px;height:11px;background:linear-gradient(#e4e4e4,#e7e5d7);"></div><div class="ct" style="left:300.40px;width:34.00px;text-align:center;top:264.89px;font-size:5.6px;line-height:6.72px;color:#1a1a1a;">Act. BlBPs</div>
<div class="c" style="left:334px;top:250px;width:42px;height:11px;background:linear-gradient(#e4e4e4,#e7e5d7);"></div><div class="ct" style="left:334.40px;width:42.00px;text-align:center;top:252.14px;font-size:5.6px;line-height:6.72px;color:#1a1a1a;"># Channels</div>
<div class="c" style="left:334px;top:262px;width:42px;height:11px;background:linear-gradient(#e4e4e4,#e7e5d7);"></div><div class="ct" style="left:334.40px;width:42.00px;text-align:center;top:264.89px;font-size:5.6px;line-height:6.72px;color:#1a1a1a;">Min/Max Width</div>
<div class="c" style="left:376px;top:250px;width:48px;height:11px;background:linear-gradient(#e4e4e4,#e7e5d7);"></div><div class="ct" style="left:376.40px;width:47.50px;text-align:center;top:252.14px;font-size:5.6px;line-height:6.72px;color:#1a1a1a;">AC Doppler Line</div>
<div class="c" style="left:376px;top:262px;width:48px;height:11px;background:linear-gradient(#e4e4e4,#e7e5d7);"></div><div class="ct" style="left:376.40px;width:47.50px;text-align:center;top:264.89px;font-size:5.6px;line-height:6.72px;color:#1a1a1a;">BD Doppler Line</div>
<div class="c" style="left:424px;top:250px;width:56px;height:11px;background:linear-gradient(#e4e4e4,#e7e5d7);"></div><div class="ct" style="left:423.90px;width:55.80px;text-align:center;top:252.14px;font-size:5.6px;line-height:6.72px;color:#1a1a1a;">AC Doppler Vel.</div>
<div class="c" style="left:424px;top:262px;width:56px;height:11px;background:linear-gradient(#e4e4e4,#e7e5d7);"></div><div class="ct" style="left:423.90px;width:55.80px;text-align:center;top:264.89px;font-size:5.6px;line-height:6.72px;color:#1a1a1a;">BD Doppler Vel.</div>
<div class="c" style="left:480px;top:250px;width:80px;height:11px;background:linear-gradient(#e4e4e4,#e7e5d7);"></div><div class="ct" style="left:479.70px;width:79.90px;text-align:center;top:252.14px;font-size:5.6px;line-height:6.72px;color:#1a1a1a;">AC Doppler Pos.</div>
<div class="c" style="left:480px;top:262px;width:80px;height:11px;background:linear-gradient(#e4e4e4,#e7e5d7);"></div><div class="ct" style="left:479.70px;width:79.90px;text-align:center;top:264.89px;font-size:5.6px;line-height:6.72px;color:#1a1a1a;">BD Doppler Pos.</div>
<div class="c" style="left:560px;top:250px;width:45px;height:11px;background:linear-gradient(#e4e4e4,#e7e5d7);"></div><div class="ct" style="left:559.60px;width:45.10px;text-align:center;top:252.14px;font-size:5.6px;line-height:6.72px;color:#1a1a1a;">AC Doppler Off.</div>
<div class="c" style="left:560px;top:262px;width:45px;height:11px;background:linear-gradient(#e4e4e4,#e7e5d7);"></div><div class="ct" style="left:559.60px;width:45.10px;text-align:center;top:264.89px;font-size:5.6px;line-height:6.72px;color:#1a1a1a;">BD Doppler Off.</div>
<div class="c" style="left:605px;top:250px;width:37px;height:23px;background:linear-gradient(#e4e4e4,#e7e5d7);"></div><div class="ct" style="left:604.70px;width:37.00px;text-align:center;top:258.94px;font-size:5.6px;line-height:6.72px;color:#1a1a1a;">Data Rate</div>
<div class="c" style="left:642px;top:250px;width:20px;height:23px;background:linear-gradient(#e4e4e4,#e7e5d7);"></div><div class="ct" style="left:641.70px;width:20.60px;text-align:center;top:255.58px;font-size:5.6px;line-height:6.72px;color:#1a1a1a;">Pulsar<br>Cnfg</div>
<div class="c" style="left:662px;top:250px;width:30px;height:11px;background:linear-gradient(#e4e4e4,#e7e5d7);"></div><div class="ct" style="left:662.30px;width:30.10px;text-align:center;top:252.14px;font-size:5.6px;line-height:6.72px;color:#1a1a1a;">VDIF</div>
<div class="c" style="left:662px;top:262px;width:30px;height:11px;background:linear-gradient(#e4e4e4,#e7e5d7);"></div><div class="ct" style="left:662.30px;width:30.10px;text-align:center;top:264.89px;font-size:5.6px;line-height:6.72px;color:#1a1a1a;">VLITE Off</div>
<div class="abs" style="left:146px;top:261px;width:18.400000000000006px;height:1.3000000000000114px;background:#55554f"></div>
<div class="abs" style="left:165px;top:261px;width:48.400000000000006px;height:1.3000000000000114px;background:#55554f"></div>
<div class="abs" style="left:214px;top:261px;width:46.39999999999998px;height:1.3000000000000114px;background:#55554f"></div>
<div class="abs" style="left:261px;top:261px;width:38.39999999999998px;height:1.3000000000000114px;background:#55554f"></div>
<div class="abs" style="left:300px;top:261px;width:33.39999999999998px;height:1.3000000000000114px;background:#55554f"></div>
<div class="abs" style="left:334px;top:261px;width:41.39999999999998px;height:1.3000000000000114px;background:#55554f"></div>
<div class="abs" style="left:376px;top:261px;width:47.39999999999998px;height:1.3000000000000114px;background:#55554f"></div>
<div class="abs" style="left:424px;top:261px;width:55.39999999999998px;height:1.3000000000000114px;background:#55554f"></div>
<div class="abs" style="left:480px;top:261px;width:79.39999999999998px;height:1.3000000000000114px;background:#55554f"></div>
<div class="abs" style="left:560px;top:261px;width:44.39999999999998px;height:1.3000000000000114px;background:#55554f"></div>
<div class="abs" style="left:662px;top:261px;width:29.399999999999977px;height:1.3000000000000114px;background:#55554f"></div>
<div class="abs" style="left:146.5px;top:273px;width:545.9px;height:1.6000000000000227px;background:#4a4a46"></div>
<div class="c" style="left:146px;top:275px;width:19px;height:9px;background:#e3e3e3;"></div><div class="ct" style="left:149.10px;top:276.14px;font-size:5.6px;line-height:6.72px;color:#1a1a1a;">5s</div>
<div class="c" style="left:146px;top:284px;width:19px;height:10px;background:#e3e3e3;"></div><div class="ct" style="left:149.10px;top:285.84px;font-size:5.6px;line-height:6.72px;color:#1a1a1a;">L</div>
<div class="c" style="left:165px;top:275px;width:49px;height:9px;background:#e3e3e3;"></div><div class="ct" style="left:167.60px;top:276.14px;font-size:5.6px;line-height:6.72px;color:#1a1a1a;">1.6937114GHz</div>
<div class="c" style="left:165px;top:284px;width:49px;height:10px;background:#e3e3e3;"></div><div class="ct" style="left:167.60px;top:285.84px;font-size:5.6px;line-height:6.72px;color:#1a1a1a;">1.6937114GHz</div>
<div class="c" style="left:214px;top:275px;width:47px;height:9px;background:#e3e3e3;"></div><div class="ct" style="left:216.20px;top:276.14px;font-size:5.6px;line-height:6.72px;color:#1a1a1a;">4.0MHz</div>
<div class="c" style="left:214px;top:284px;width:47px;height:10px;background:#e3e3e3;"></div><div class="ct" style="left:216.20px;top:285.84px;font-size:5.6px;line-height:6.72px;color:#1a1a1a;">0.0GHz</div>
<div class="c" style="left:261px;top:275px;width:39px;height:9px;background:#e3e3e3;"></div><div class="ct" style="left:263.85px;top:276.14px;font-size:5.6px;line-height:6.72px;color:#1a1a1a;">0.390625 %</div>
<div class="c" style="left:261px;top:284px;width:39px;height:10px;background:#e3e3e3;"></div><div class="ct" style="left:263.85px;top:285.84px;font-size:5.6px;line-height:6.72px;color:#1a1a1a;">--- %</div>
<div class="c" style="left:300px;top:275px;width:34px;height:9px;background:#e3e3e3;"></div><div class="ct" style="left:303.00px;top:276.14px;font-size:5.6px;line-height:6.72px;color:#1a1a1a;">4</div>
<div class="c" style="left:300px;top:284px;width:34px;height:10px;background:#e3e3e3;"></div><div class="ct" style="left:303.00px;top:285.84px;font-size:5.6px;line-height:6.72px;color:#1a1a1a;">4</div>
<div class="c" style="left:334px;top:275px;width:42px;height:9px;background:#e3e3e3;"></div><div class="ct" style="left:337.00px;top:276.14px;font-size:5.6px;line-height:6.72px;color:#1a1a1a;">4096</div>
<div class="c" style="left:334px;top:284px;width:42px;height:10px;background:#e3e3e3;"></div><div class="ct" style="left:337.00px;top:285.84px;font-size:5.6px;line-height:6.72px;color:#1a1a1a;">977Hz / 977Hz</div>
<div class="c" style="left:376px;top:275px;width:48px;height:9px;background:#e3e3e3;"></div><div class="ct" style="left:379.00px;top:276.14px;font-size:5.6px;line-height:6.72px;color:#1a1a1a;">1.6654018GHz</div>
<div class="c" style="left:376px;top:284px;width:48px;height:10px;background:#e3e3e3;"></div><div class="ct" style="left:379.00px;top:285.84px;font-size:5.6px;line-height:6.72px;color:#1a1a1a;">---</div>
<div class="c" style="left:424px;top:275px;width:56px;height:9px;background:#e3e3e3;"></div><div class="ct" style="left:426.50px;top:276.14px;font-size:5.6px;line-height:6.72px;color:#1a1a1a;">21.0km/s LSR Radio</div>
<div class="c" style="left:424px;top:284px;width:56px;height:10px;background:#e3e3e3;"></div><div class="ct" style="left:426.50px;top:285.84px;font-size:5.6px;line-height:6.72px;color:#1a1a1a;">--- --- ---</div>
<div class="c" style="left:480px;top:275px;width:80px;height:9px;background:#e3e3e3;"></div><div class="ct" style="left:482.30px;top:276.14px;font-size:5.6px;line-height:6.72px;color:#1a1a1a;">7h 25m 34.68s 29d 29' 26.40"</div>
<div class="c" style="left:480px;top:284px;width:80px;height:10px;background:#e3e3e3;"></div><div class="ct" style="left:482.30px;top:285.84px;font-size:5.6px;line-height:6.72px;color:#1a1a1a;">---</div>
<div class="c" style="left:560px;top:275px;width:45px;height:9px;background:#e3e3e3;"></div><div class="ct" style="left:562.20px;top:276.14px;font-size:5.6px;line-height:6.72px;color:#1a1a1a;">28.538683</div>
<div class="c" style="left:560px;top:284px;width:45px;height:10px;background:#e3e3e3;"></div><div class="ct" style="left:562.20px;top:285.84px;font-size:5.6px;line-height:6.72px;color:#1a1a1a;">---</div>
<div class="c" style="left:605px;top:275px;width:37px;height:9px;background:#e3e3e3;"></div><div class="ct" style="left:607.30px;top:276.14px;font-size:5.6px;line-height:6.72px;color:#1a1a1a;">9.477 MB/s</div>
<div class="c" style="left:605px;top:284px;width:37px;height:10px;background:#e3e3e3;"></div><div class="ct" style="left:607.30px;top:285.84px;font-size:5.6px;line-height:6.72px;color:#1a1a1a;">34.115 GB/h</div>
<div class="c" style="left:642px;top:275px;width:20px;height:19px;background:#e3e3e3;"></div><div class="ct" style="left:641.70px;width:20.60px;text-align:center;top:280.94px;font-size:5.6px;line-height:6.72px;color:#1a1a1a;">None</div>
<div class="c" style="left:662px;top:275px;width:30px;height:9px;background:#e3e3e3;"></div><div class="ct" style="left:664.90px;top:276.14px;font-size:5.6px;line-height:6.72px;color:#1a1a1a;">No</div>
<div class="c" style="left:662px;top:284px;width:30px;height:10px;background:#e3e3e3;"></div><div class="ct" style="left:664.90px;top:285.84px;font-size:5.6px;line-height:6.72px;color:#1a1a1a;">No</div>
<div class="abs" style="left:146px;top:299px;width:554px;height:59px;background:#d4d4d4"></div>
<div class="c" style="left:146px;top:300px;width:6px;height:16px;background:linear-gradient(#e4e4e4,#e7e5d7);"></div>
<div class="c" style="left:152px;top:300px;width:30px;height:16px;background:linear-gradient(#e4e4e4,#e7e5d7);"></div><div class="ct" style="left:152.00px;width:30.50px;text-align:center;top:304.84px;font-size:5.6px;line-height:6.72px;color:#1a1a1a;">Baseband</div>
<div class="c" style="left:182px;top:300px;width:12px;height:16px;background:linear-gradient(#e4e4e4,#e7e5d7);"></div><div class="ct" style="left:182.50px;width:11.10px;text-align:center;top:304.84px;font-size:5.6px;line-height:6.72px;color:#1a1a1a;">ID</div>
<div class="c" style="left:194px;top:300px;width:30px;height:16px;background:linear-gradient(#e4e4e4,#e7e5d7);"></div><div class="ct" style="left:193.60px;width:30.90px;text-align:center;top:301.48px;font-size:5.6px;line-height:6.72px;color:#1a1a1a;">Subband<br>Bandwidth</div>
<div class="c" style="left:224px;top:300px;width:93px;height:16px;background:linear-gradient(#e4e4e4,#e7e5d7);"></div><div class="ct" style="left:224.50px;width:92.90px;text-align:center;top:304.84px;font-size:5.6px;line-height:6.72px;color:#1a1a1a;">Frequency Range</div>
<div class="c" style="left:317px;top:300px;width:47px;height:16px;background:linear-gradient(#e4e4e4,#e7e5d7);"></div><div class="ct" style="left:317.40px;width:46.30px;text-align:center;top:304.84px;font-size:5.6px;line-height:6.72px;color:#1a1a1a;">Center</div>
<div class="c" style="left:364px;top:300px;width:30px;height:16px;background:linear-gradient(#e4e4e4,#e7e5d7);"></div><div class="ct" style="left:363.70px;width:30.60px;text-align:center;top:301.48px;font-size:5.6px;line-height:6.72px;color:#1a1a1a;">Fixed To<br>Baseband</div>
<div class="c" style="left:394px;top:300px;width:26px;height:16px;background:linear-gradient(#e4e4e4,#e7e5d7);"></div><div class="ct" style="left:394.30px;width:25.30px;text-align:center;top:301.48px;font-size:5.6px;line-height:6.72px;color:#1a1a1a;">Snap To<br>Grid</div>
<div class="c" style="left:420px;top:300px;width:19px;height:16px;background:linear-gradient(#e4e4e4,#e7e5d7);"></div><div class="ct" style="left:421.80px;top:304.84px;font-size:5.6px;line-height:6.72px;color:#1a1a1a;">Polzn</div>
<div class="c" style="left:439px;top:300px;width:21px;height:16px;background:linear-gradient(#e4e4e4,#e7e5d7);"></div><div class="ct" style="left:441.40px;top:304.84px;font-size:5.6px;line-height:6.72px;color:#1a1a1a;">BlBPs</div>
<div class="c" style="left:460px;top:300px;width:20px;height:16px;background:linear-gradient(#e4e4e4,#e7e5d7);"></div><div class="ct" style="left:461.70px;top:304.84px;font-size:5.6px;line-height:6.72px;color:#1a1a1a;">Recirc</div>
<div class="c" style="left:480px;top:300px;width:30px;height:16px;background:linear-gradient(#e4e4e4,#e7e5d7);"></div><div class="ct" style="left:482.70px;top:304.84px;font-size:5.6px;line-height:6.72px;color:#1a1a1a;">Channels</div>
<div class="c" style="left:510px;top:300px;width:30px;height:16px;background:linear-gradient(#e4e4e4,#e7e5d7);"></div><div class="ct" style="left:511.80px;top:304.84px;font-size:5.6px;line-height:6.72px;color:#1a1a1a;">Ch. Width</div>
<div class="c" style="left:540px;top:300px;width:33px;height:16px;background:linear-gradient(#e4e4e4,#e7e5d7);"></div><div class="ct" style="left:541.90px;top:304.84px;font-size:5.6px;line-height:6.72px;color:#1a1a1a;">Sum. Array</div>
<div class="c" style="left:573px;top:300px;width:33px;height:16px;background:linear-gradient(#e4e4e4,#e7e5d7);"></div><div class="ct" style="left:573.00px;width:33.50px;text-align:center;top:304.84px;font-size:5.6px;line-height:6.72px;color:#1a1a1a;">Data Rate</div>
<div class="c" style="left:606px;top:300px;width:23px;height:16px;background:linear-gradient(#e4e4e4,#e7e5d7);"></div><div class="ct" style="left:608.70px;top:304.84px;font-size:5.6px;line-height:6.72px;color:#1a1a1a;">Priority</div>
<div class="c" style="left:629px;top:300px;width:71px;height:16px;background:linear-gradient(#e4e4e4,#e7e5d7);"></div><div class="ct" style="left:629.40px;width:70.40px;text-align:center;top:304.84px;font-size:5.6px;line-height:6.72px;color:#1a1a1a;">Comments</div>
<div class="abs" style="left:146.3px;top:315.7px;width:553.5px;height:1.1999999999999886px;background:#3a3a36"></div>
<div class="abs" style="left:146.3px;top:316.9px;width:5.699999999999989px;height:40.10000000000002px;background:#14e48c"></div>
<div class="c" style="left:152px;top:317px;width:30px;height:40px;background:#e3e3e3;"></div><div class="ct" style="left:154.80px;top:333.59px;font-size:5.6px;line-height:6.72px;color:#1a1a1a;">A0/C0</div>
<div class="c" style="left:182px;top:317px;width:12px;height:11px;background:#e3e3e3;"></div><div class="ct" style="left:185.10px;top:318.54px;font-size:5.6px;line-height:6.72px;color:#1a1a1a;">0</div>
<div class="c" style="left:194px;top:317px;width:30px;height:11px;background:#e3e3e3;"></div><div class="ct" style="left:196.20px;top:318.54px;font-size:5.6px;line-height:6.72px;color:#1a1a1a;">1MHz</div>
<div class="c" style="left:224px;top:317px;width:93px;height:11px;background:#e3e3e3;"></div><div class="ct" style="left:227.10px;top:318.54px;font-size:5.6px;line-height:6.72px;color:#1a1a1a;">1.61150923GHz - 1.61250923GHz</div>
<div class="c" style="left:317px;top:317px;width:47px;height:11px;background:#e3e3e3;"></div><div class="ct" style="left:320.00px;top:318.54px;font-size:5.6px;line-height:6.72px;color:#1a1a1a;">1.61200923GHz</div>
<div class="c" style="left:364px;top:317px;width:30px;height:11px;background:#e3e3e3;"></div><div class="ct" style="left:366.30px;top:318.54px;font-size:5.6px;line-height:6.72px;color:#1a1a1a;">No</div>
<div class="c" style="left:394px;top:317px;width:26px;height:11px;background:#e3e3e3;"></div><div class="ct" style="left:396.90px;top:318.54px;font-size:5.6px;line-height:6.72px;color:#1a1a1a;">No</div>
<div class="c" style="left:420px;top:317px;width:19px;height:11px;background:#e3e3e3;"></div><div class="ct" style="left:422.20px;top:318.54px;font-size:5.6px;line-height:6.72px;color:#1a1a1a;">Full</div>
<div class="c" style="left:439px;top:317px;width:21px;height:11px;background:#e3e3e3;"></div><div class="ct" style="left:441.80px;top:318.54px;font-size:5.6px;line-height:6.72px;color:#1a1a1a;">1</div>
<div class="c" style="left:460px;top:317px;width:20px;height:11px;background:#e3e3e3;"></div><div class="ct" style="left:462.10px;top:318.54px;font-size:5.6px;line-height:6.72px;color:#1a1a1a;"><b>16×</b></div>
<div class="c" style="left:480px;top:317px;width:30px;height:11px;background:#e3e3e3;"></div><div class="ct" style="left:483.10px;top:318.54px;font-size:5.6px;line-height:6.72px;color:#1a1a1a;">1024</div>
<div class="c" style="left:510px;top:317px;width:30px;height:11px;background:#e3e3e3;"></div><div class="ct" style="left:512.20px;top:318.54px;font-size:5.6px;line-height:6.72px;color:#1a1a1a;">977Hz</div>
<div class="c" style="left:540px;top:317px;width:33px;height:11px;background:#e3e3e3;"></div><div class="ct" style="left:542.30px;top:318.54px;font-size:5.6px;line-height:6.72px;color:#1a1a1a;">None</div>
<div class="c" style="left:573px;top:317px;width:33px;height:11px;background:#e3e3e3;"></div><div class="ct" style="left:575.60px;top:318.54px;font-size:5.6px;line-height:6.72px;color:#1a1a1a;">2.369 MB/s</div>
<div class="c" style="left:606px;top:317px;width:23px;height:11px;background:#e3e3e3;"></div><div class="ct" style="left:609.10px;top:318.54px;font-size:5.6px;line-height:6.72px;color:#1a1a1a;">0</div>
<div class="c" style="left:629px;top:317px;width:71px;height:11px;background:#e3e3e3;"></div><div class="ct" style="left:632.00px;top:318.54px;font-size:5.6px;line-height:6.72px;color:#1a1a1a;">OH 1612 - 1.612231GHz</div>
<div class="c" style="left:182px;top:328px;width:12px;height:10px;background:#e3e3e3;"></div><div class="ct" style="left:185.10px;top:328.64px;font-size:5.6px;line-height:6.72px;color:#1a1a1a;">1</div>
<div class="c" style="left:194px;top:328px;width:30px;height:10px;background:#e3e3e3;"></div><div class="ct" style="left:196.20px;top:328.64px;font-size:5.6px;line-height:6.72px;color:#1a1a1a;">1MHz</div>
<div class="c" style="left:224px;top:328px;width:93px;height:10px;background:#e3e3e3;"></div><div class="ct" style="left:227.10px;top:328.64px;font-size:5.6px;line-height:6.72px;color:#1a1a1a;">1.66467272GHz - 1.66567272GHz</div>
<div class="c" style="left:317px;top:328px;width:47px;height:10px;background:#e3e3e3;"></div><div class="ct" style="left:320.00px;top:328.64px;font-size:5.6px;line-height:6.72px;color:#1a1a1a;">1.66517272GHz</div>
<div class="c" style="left:364px;top:328px;width:30px;height:10px;background:#e3e3e3;"></div><div class="ct" style="left:366.30px;top:328.64px;font-size:5.6px;line-height:6.72px;color:#1a1a1a;">No</div>
<div class="c" style="left:394px;top:328px;width:26px;height:10px;background:#e3e3e3;"></div><div class="ct" style="left:396.90px;top:328.64px;font-size:5.6px;line-height:6.72px;color:#1a1a1a;">No</div>
<div class="c" style="left:420px;top:328px;width:19px;height:10px;background:#e3e3e3;"></div><div class="ct" style="left:422.20px;top:328.64px;font-size:5.6px;line-height:6.72px;color:#1a1a1a;">Full</div>
<div class="c" style="left:439px;top:328px;width:21px;height:10px;background:#e3e3e3;"></div><div class="ct" style="left:441.80px;top:328.64px;font-size:5.6px;line-height:6.72px;color:#1a1a1a;">1</div>
<div class="c" style="left:460px;top:328px;width:20px;height:10px;background:#e3e3e3;"></div><div class="ct" style="left:462.10px;top:328.64px;font-size:5.6px;line-height:6.72px;color:#1a1a1a;"><b>16×</b></div>
<div class="c" style="left:480px;top:328px;width:30px;height:10px;background:#e3e3e3;"></div><div class="ct" style="left:483.10px;top:328.64px;font-size:5.6px;line-height:6.72px;color:#1a1a1a;">1024</div>
<div class="c" style="left:510px;top:328px;width:30px;height:10px;background:#e3e3e3;"></div><div class="ct" style="left:512.20px;top:328.64px;font-size:5.6px;line-height:6.72px;color:#1a1a1a;">977Hz</div>
<div class="c" style="left:540px;top:328px;width:33px;height:10px;background:#e3e3e3;"></div><div class="ct" style="left:542.30px;top:328.64px;font-size:5.6px;line-height:6.72px;color:#1a1a1a;">None</div>
<div class="c" style="left:573px;top:328px;width:33px;height:10px;background:#e3e3e3;"></div><div class="ct" style="left:575.60px;top:328.64px;font-size:5.6px;line-height:6.72px;color:#1a1a1a;">2.369 MB/s</div>
<div class="c" style="left:606px;top:328px;width:23px;height:10px;background:#e3e3e3;"></div><div class="ct" style="left:609.10px;top:328.64px;font-size:5.6px;line-height:6.72px;color:#1a1a1a;">0</div>
<div class="c" style="left:629px;top:328px;width:71px;height:10px;background:#e3e3e3;"></div><div class="ct" style="left:632.00px;top:328.64px;font-size:5.6px;line-height:6.72px;color:#1a1a1a;">OH 1665 - 1.6654018GHz</div>
<div class="c" style="left:182px;top:338px;width:12px;height:9px;background:#e3e3e3;"></div><div class="ct" style="left:185.10px;top:338.34px;font-size:5.6px;line-height:6.72px;color:#1a1a1a;">2</div>
<div class="c" style="left:194px;top:338px;width:30px;height:9px;background:#e3e3e3;"></div><div class="ct" style="left:196.20px;top:338.34px;font-size:5.6px;line-height:6.72px;color:#1a1a1a;">1MHz</div>
<div class="c" style="left:224px;top:338px;width:93px;height:9px;background:#e3e3e3;"></div><div class="ct" style="left:227.10px;top:338.34px;font-size:5.6px;line-height:6.72px;color:#1a1a1a;">1.66662965GHz - 1.66762965GHz</div>
<div class="c" style="left:317px;top:338px;width:47px;height:9px;background:#e3e3e3;"></div><div class="ct" style="left:320.00px;top:338.34px;font-size:5.6px;line-height:6.72px;color:#1a1a1a;">1.66712965GHz</div>
<div class="c" style="left:364px;top:338px;width:30px;height:9px;background:#e3e3e3;"></div><div class="ct" style="left:366.30px;top:338.34px;font-size:5.6px;line-height:6.72px;color:#1a1a1a;">No</div>
<div class="c" style="left:394px;top:338px;width:26px;height:9px;background:#e3e3e3;"></div><div class="ct" style="left:396.90px;top:338.34px;font-size:5.6px;line-height:6.72px;color:#1a1a1a;">No</div>
<div class="c" style="left:420px;top:338px;width:19px;height:9px;background:#e3e3e3;"></div><div class="ct" style="left:422.20px;top:338.34px;font-size:5.6px;line-height:6.72px;color:#1a1a1a;">Full</div>
<div class="c" style="left:439px;top:338px;width:21px;height:9px;background:#e3e3e3;"></div><div class="ct" style="left:441.80px;top:338.34px;font-size:5.6px;line-height:6.72px;color:#1a1a1a;">1</div>
<div class="c" style="left:460px;top:338px;width:20px;height:9px;background:#e3e3e3;"></div><div class="ct" style="left:462.10px;top:338.34px;font-size:5.6px;line-height:6.72px;color:#1a1a1a;"><b>16×</b></div>
<div class="c" style="left:480px;top:338px;width:30px;height:9px;background:#e3e3e3;"></div><div class="ct" style="left:483.10px;top:338.34px;font-size:5.6px;line-height:6.72px;color:#1a1a1a;">1024</div>
<div class="c" style="left:510px;top:338px;width:30px;height:9px;background:#e3e3e3;"></div><div class="ct" style="left:512.20px;top:338.34px;font-size:5.6px;line-height:6.72px;color:#1a1a1a;">977Hz</div>
<div class="c" style="left:540px;top:338px;width:33px;height:9px;background:#e3e3e3;"></div><div class="ct" style="left:542.30px;top:338.34px;font-size:5.6px;line-height:6.72px;color:#1a1a1a;">None</div>
<div class="c" style="left:573px;top:338px;width:33px;height:9px;background:#e3e3e3;"></div><div class="ct" style="left:575.60px;top:338.34px;font-size:5.6px;line-height:6.72px;color:#1a1a1a;">2.369 MB/s</div>
<div class="c" style="left:606px;top:338px;width:23px;height:9px;background:#e3e3e3;"></div><div class="ct" style="left:609.10px;top:338.34px;font-size:5.6px;line-height:6.72px;color:#1a1a1a;">0</div>
<div class="c" style="left:629px;top:338px;width:71px;height:9px;background:#e3e3e3;"></div><div class="ct" style="left:632.00px;top:338.34px;font-size:5.6px;line-height:6.72px;color:#1a1a1a;">OH 1667 - 1.667359GHz</div>
<div class="c" style="left:182px;top:347px;width:12px;height:10px;background:#e3e3e3;"></div><div class="ct" style="left:185.10px;top:348.34px;font-size:5.6px;line-height:6.72px;color:#1a1a1a;">3</div>
<div class="c" style="left:194px;top:347px;width:30px;height:10px;background:#e3e3e3;"></div><div class="ct" style="left:196.20px;top:348.34px;font-size:5.6px;line-height:6.72px;color:#1a1a1a;">1MHz</div>
<div class="c" style="left:224px;top:347px;width:93px;height:10px;background:#e3e3e3;"></div><div class="ct" style="left:227.10px;top:348.34px;font-size:5.6px;line-height:6.72px;color:#1a1a1a;">1.71979333GHz - 1.72079333GHz</div>
<div class="c" style="left:317px;top:347px;width:47px;height:10px;background:#e3e3e3;"></div><div class="ct" style="left:320.00px;top:348.34px;font-size:5.6px;line-height:6.72px;color:#1a1a1a;">1.72029333GHz</div>
<div class="c" style="left:364px;top:347px;width:30px;height:10px;background:#e3e3e3;"></div><div class="ct" style="left:366.30px;top:348.34px;font-size:5.6px;line-height:6.72px;color:#1a1a1a;">No</div>
<div class="c" style="left:394px;top:347px;width:26px;height:10px;background:#e3e3e3;"></div><div class="ct" style="left:396.90px;top:348.34px;font-size:5.6px;line-height:6.72px;color:#1a1a1a;">No</div>
<div class="c" style="left:420px;top:347px;width:19px;height:10px;background:#e3e3e3;"></div><div class="ct" style="left:422.20px;top:348.34px;font-size:5.6px;line-height:6.72px;color:#1a1a1a;">Full</div>
<div class="c" style="left:439px;top:347px;width:21px;height:10px;background:#e3e3e3;"></div><div class="ct" style="left:441.80px;top:348.34px;font-size:5.6px;line-height:6.72px;color:#1a1a1a;">1</div>
<div class="c" style="left:460px;top:347px;width:20px;height:10px;background:#e3e3e3;"></div><div class="ct" style="left:462.10px;top:348.34px;font-size:5.6px;line-height:6.72px;color:#1a1a1a;"><b>16×</b></div>
<div class="c" style="left:480px;top:347px;width:30px;height:10px;background:#e3e3e3;"></div><div class="ct" style="left:483.10px;top:348.34px;font-size:5.6px;line-height:6.72px;color:#1a1a1a;">1024</div>
<div class="c" style="left:510px;top:347px;width:30px;height:10px;background:#e3e3e3;"></div><div class="ct" style="left:512.20px;top:348.34px;font-size:5.6px;line-height:6.72px;color:#1a1a1a;">977Hz</div>
<div class="c" style="left:540px;top:347px;width:33px;height:10px;background:#e3e3e3;"></div><div class="ct" style="left:542.30px;top:348.34px;font-size:5.6px;line-height:6.72px;color:#1a1a1a;">None</div>
<div class="c" style="left:573px;top:347px;width:33px;height:10px;background:#e3e3e3;"></div><div class="ct" style="left:575.60px;top:348.34px;font-size:5.6px;line-height:6.72px;color:#1a1a1a;">2.369 MB/s</div>
<div class="c" style="left:606px;top:347px;width:23px;height:10px;background:#e3e3e3;"></div><div class="ct" style="left:609.10px;top:348.34px;font-size:5.6px;line-height:6.72px;color:#1a1a1a;">0</div>
<div class="c" style="left:629px;top:347px;width:71px;height:10px;background:#e3e3e3;"></div><div class="ct" style="left:632.00px;top:348.34px;font-size:5.6px;line-height:6.72px;color:#1a1a1a;">OH 1720 - 1.72053GHz</div><!--/TABLES-->
<!-- FOOTER LINKS -->
<div class="t" style="left:142.2px;top:390.8px;font-size:5.8px;color:#1a1ad0">Download XML</div>
<div class="t" style="left:183.8px;top:390.8px;font-size:5.9px;color:#111">|</div>
<div class="t" style="left:187px;top:390.8px;font-size:5.8px;color:#1a1ad0">Download VCI</div>
<div class="t" style="left:226.6px;top:391px;font-size:5.9px;color:#111">|</div>
<div class="t" style="left:229.7px;top:391.6px;font-size:6.4px;color:#1a1ad0">Download Validation Report (PDF)</div>
</div></body></html>
